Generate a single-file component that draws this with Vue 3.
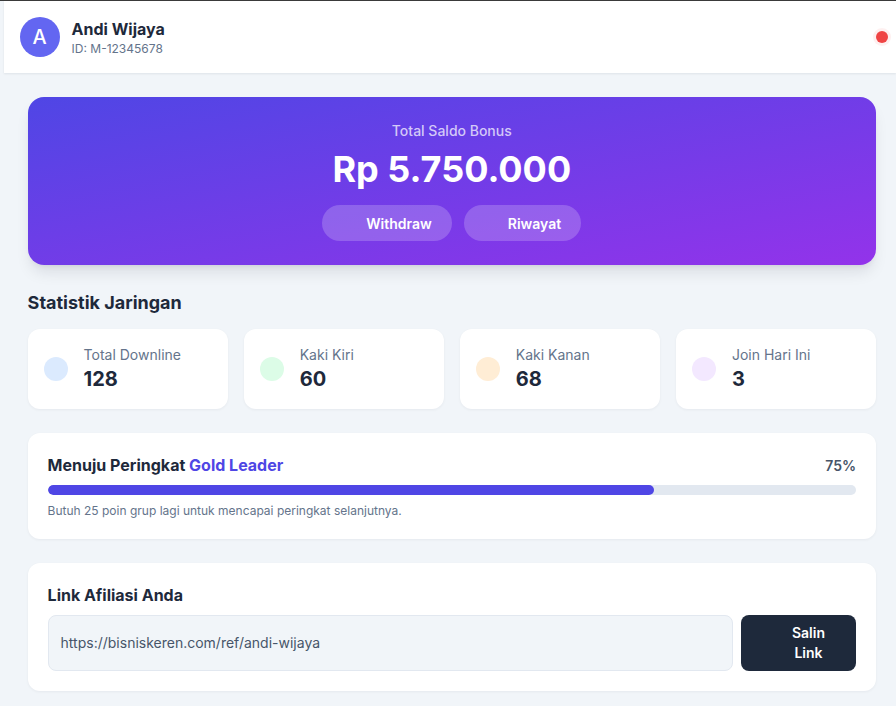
<script setup>
const stats = [
  { label: 'Total Downline', value: '128', tone: 'blue' },
  { label: 'Kaki Kiri', value: '60', tone: 'green' },
  { label: 'Kaki Kanan', value: '68', tone: 'orange' },
  { label: 'Join Hari Ini', value: '3', tone: 'purple' }
]

const progress = 75
</script>

<template>
  <div class="page">
    <header class="topbar">
      <div class="user">
        <div class="avatar">A</div>
        <div>
          <p class="user-name">Andi Wijaya</p>
          <p class="user-id">ID: M-12345678</p>
        </div>
      </div>
      <span class="status-dot"></span>
    </header>

    <main class="content">
      <section class="hero">
        <p class="hero-label">Total Saldo Bonus</p>
        <p class="hero-amount">Rp 5.750.000</p>
        <div class="hero-actions">
          <button class="pill"><span class="icon-slot"></span>Withdraw</button>
          <button class="pill"><span class="icon-slot"></span>Riwayat</button>
        </div>
      </section>

      <section class="stats">
        <h2 class="section-title">Statistik Jaringan</h2>
        <div class="stat-grid">
          <div v-for="stat in stats" :key="stat.label" class="stat-card">
            <span class="stat-icon" :class="stat.tone"></span>
            <div>
              <p class="stat-label">{{ stat.label }}</p>
              <p class="stat-value">{{ stat.value }}</p>
            </div>
          </div>
        </div>
      </section>

      <section class="card rank">
        <div class="rank-head">
          <h3 class="card-title">Menuju Peringkat <span class="accent">Gold Leader</span></h3>
          <span class="rank-percent">{{ progress }}%</span>
        </div>
        <div class="track">
          <div class="fill" :style="{ width: progress + '%' }"></div>
        </div>
        <p class="rank-note">Butuh 25 poin grup lagi untuk mencapai peringkat selanjutnya.</p>
      </section>

      <section class="card link">
        <h3 class="card-title">Link Afiliasi Anda</h3>
        <div class="link-row">
          <div class="link-field">https://bisniskeren.com/ref/andi-wijaya</div>
          <button class="copy"><span class="icon-slot"></span><span>Salin Link</span></button>
        </div>
      </section>
    </main>
  </div>
</template>

<style>
html,
body {
  margin: 0;
  background: #f1f5f9;
}
</style>

<style scoped>
.page {
  width: 896px;
  height: 706px;
  overflow: hidden;
  box-sizing: border-box;
  border-top: 1px solid #3a3a3a;
  padding-left: 3.6px;
  background: #f1f5f9;
  font-family: Inter, "Liberation Sans", sans-serif;
  color: #1e293b;
}

p,
h2,
h3 {
  margin: 0;
}

button {
  font-family: inherit;
  border: none;
}

/* header */
.topbar {
  height: 72px;
  box-sizing: border-box;
  padding: 0 8px 0 16px;
  display: flex;
  align-items: center;
  justify-content: space-between;
  background: #fff;
  box-shadow: 0 1px 2px rgba(15, 23, 42, 0.08);
}

.user {
  display: flex;
  align-items: center;
  gap: 12px;
}

.avatar {
  width: 40px;
  height: 40px;
  border-radius: 50%;
  background: #6366f1;
  color: #fff;
  font-size: 20px;
  font-weight: 500;
  display: flex;
  align-items: center;
  justify-content: center;
}

.user-name {
  font-size: 16px;
  line-height: 24px;
  font-weight: 700;
}

.user-id {
  font-size: 12px;
  line-height: 16px;
  color: #64748b;
}

.status-dot {
  width: 12px;
  height: 12px;
  border-radius: 50%;
  background: #ef4444;
  box-shadow: 0 0 0 3px rgba(239, 68, 68, 0.08);
}

/* main */
.content {
  padding: 24px 20px 24px 24px;
}

.hero {
  height: 168px;
  box-sizing: border-box;
  padding-top: 24px;
  border-radius: 16px;
  background: linear-gradient(to bottom right, #4f46e5, #9333ea);
  box-shadow: 0 10px 15px -3px rgba(15, 23, 42, 0.1), 0 4px 6px -4px rgba(15, 23, 42, 0.1);
  color: #fff;
  text-align: center;
}

.hero-label {
  font-size: 14px;
  line-height: 20px;
  font-weight: 500;
  color: rgba(255, 255, 255, 0.72);
}

.hero-amount {
  margin-top: 8px;
  font-size: 36px;
  line-height: 40px;
  font-weight: 700;
}

.hero-actions {
  margin-top: 16px;
  display: flex;
  justify-content: center;
  gap: 12px;
}

.pill {
  height: 36px;
  padding: 0 20px;
  display: flex;
  align-items: center;
  gap: 8px;
  border-radius: 18px;
  background: rgba(255, 255, 255, 0.2);
  color: #fff;
  font-size: 14px;
  font-weight: 600;
}

.icon-slot {
  width: 16px;
  height: 16px;
  flex: none;
}

/* stats */
.stats {
  margin-top: 24px;
}

.section-title {
  font-size: 18px;
  line-height: 28px;
  font-weight: 700;
}

.stat-grid {
  margin-top: 12px;
  display: grid;
  grid-template-columns: repeat(4, 1fr);
  gap: 16px;
}

.stat-card {
  height: 80px;
  box-sizing: border-box;
  padding: 0 16px;
  display: flex;
  align-items: center;
  gap: 16px;
  background: #fff;
  border-radius: 12px;
  box-shadow: 0 1px 3px rgba(15, 23, 42, 0.05);
}

.stat-icon {
  width: 24px;
  height: 24px;
  border-radius: 50%;
  flex: none;
}

.blue { background: #dbeafe; }
.green { background: #dcfce7; }
.orange { background: #ffedd5; }
.purple { background: #f3e8ff; }

.stat-label {
  font-size: 14px;
  line-height: 20px;
  color: #64748b;
}

.stat-value {
  font-size: 20px;
  line-height: 28px;
  font-weight: 700;
}

/* cards */
.card {
  margin-top: 24px;
  padding: 20px;
  background: #fff;
  border-radius: 12px;
  box-shadow: 0 1px 3px rgba(15, 23, 42, 0.05);
}

.card-title {
  font-size: 16px;
  line-height: 24px;
  font-weight: 700;
}

.accent {
  color: #4f46e5;
}

.rank-head {
  display: flex;
  align-items: center;
  justify-content: space-between;
}

.rank-percent {
  font-size: 14px;
  font-weight: 600;
  color: #475569;
}

.track {
  margin-top: 8px;
  height: 10px;
  border-radius: 5px;
  background: #e2e8f0;
  overflow: hidden;
}

.fill {
  height: 100%;
  border-radius: 5px;
  background: #4f46e5;
}

.rank-note {
  margin-top: 8px;
  font-size: 12px;
  line-height: 16px;
  color: #64748b;
}

.link-row {
  margin-top: 8px;
  display: flex;
  gap: 8px;
}

.link-field {
  flex: 1;
  height: 56px;
  box-sizing: border-box;
  padding: 0 12px 2px;
  display: flex;
  align-items: center;
  background: #f1f5f9;
  border: 1px solid #e2e8f0;
  border-radius: 8px;
  font-size: 14px;
  color: #475569;
}

.copy {
  width: 115px;
  height: 56px;
  padding: 0 16px;
  display: flex;
  align-items: center;
  gap: 4px;
  background: #1e293b;
  border-radius: 8px;
  color: #fff;
  font-size: 14px;
  line-height: 20px;
  font-weight: 600;
  text-align: center;
}
</style>
